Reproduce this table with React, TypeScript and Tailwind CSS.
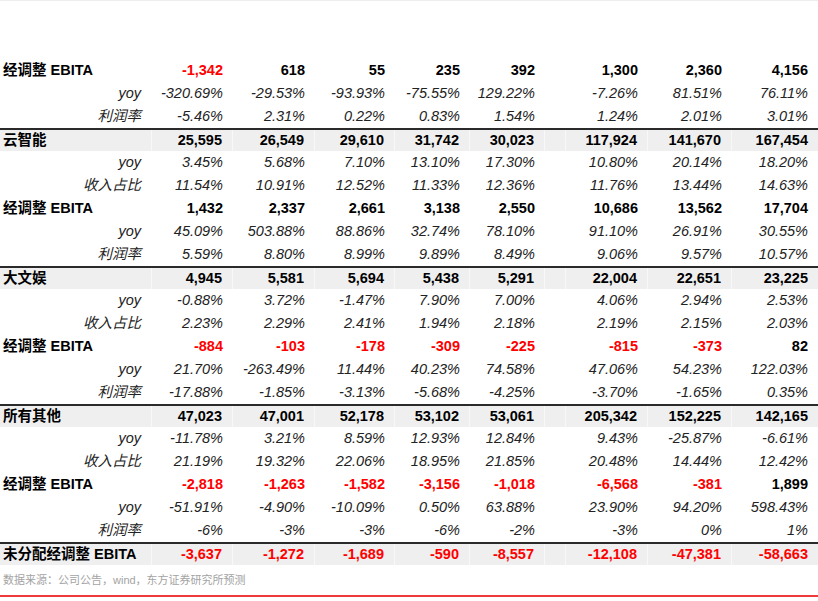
import React from 'react'

type Row = {
  label: string
  kind: 'head' | 'ebita' | 'pct'
  values: string[]
}

const rows: Row[] = [
  { label: '经调整 EBITA', kind: 'ebita', values: ['-1,342', '618', '55', '235', '392', '1,300', '2,360', '4,156'] },
  { label: 'yoy', kind: 'pct', values: ['-320.69%', '-29.53%', '-93.93%', '-75.55%', '129.22%', '-7.26%', '81.51%', '76.11%'] },
  { label: '利润率', kind: 'pct', values: ['-5.46%', '2.31%', '0.22%', '0.83%', '1.54%', '1.24%', '2.01%', '3.01%'] },

  { label: '云智能', kind: 'head', values: ['25,595', '26,549', '29,610', '31,742', '30,023', '117,924', '141,670', '167,454'] },
  { label: 'yoy', kind: 'pct', values: ['3.45%', '5.68%', '7.10%', '13.10%', '17.30%', '10.80%', '20.14%', '18.20%'] },
  { label: '收入占比', kind: 'pct', values: ['11.54%', '10.91%', '12.52%', '11.33%', '12.36%', '11.76%', '13.44%', '14.63%'] },
  { label: '经调整 EBITA', kind: 'ebita', values: ['1,432', '2,337', '2,661', '3,138', '2,550', '10,686', '13,562', '17,704'] },
  { label: 'yoy', kind: 'pct', values: ['45.09%', '503.88%', '88.86%', '32.74%', '78.10%', '91.10%', '26.91%', '30.55%'] },
  { label: '利润率', kind: 'pct', values: ['5.59%', '8.80%', '8.99%', '9.89%', '8.49%', '9.06%', '9.57%', '10.57%'] },

  { label: '大文娱', kind: 'head', values: ['4,945', '5,581', '5,694', '5,438', '5,291', '22,004', '22,651', '23,225'] },
  { label: 'yoy', kind: 'pct', values: ['-0.88%', '3.72%', '-1.47%', '7.90%', '7.00%', '4.06%', '2.94%', '2.53%'] },
  { label: '收入占比', kind: 'pct', values: ['2.23%', '2.29%', '2.41%', '1.94%', '2.18%', '2.19%', '2.15%', '2.03%'] },
  { label: '经调整 EBITA', kind: 'ebita', values: ['-884', '-103', '-178', '-309', '-225', '-815', '-373', '82'] },
  { label: 'yoy', kind: 'pct', values: ['21.70%', '-263.49%', '11.44%', '40.23%', '74.58%', '47.06%', '54.23%', '122.03%'] },
  { label: '利润率', kind: 'pct', values: ['-17.88%', '-1.85%', '-3.13%', '-5.68%', '-4.25%', '-3.70%', '-1.65%', '0.35%'] },

  { label: '所有其他', kind: 'head', values: ['47,023', '47,001', '52,178', '53,102', '53,061', '205,342', '152,225', '142,165'] },
  { label: 'yoy', kind: 'pct', values: ['-11.78%', '3.21%', '8.59%', '12.93%', '12.84%', '9.43%', '-25.87%', '-6.61%'] },
  { label: '收入占比', kind: 'pct', values: ['21.19%', '19.32%', '22.06%', '18.95%', '21.85%', '20.48%', '14.44%', '12.42%'] },
  { label: '经调整 EBITA', kind: 'ebita', values: ['-2,818', '-1,263', '-1,582', '-3,156', '-1,018', '-6,568', '-381', '1,899'] },
  { label: 'yoy', kind: 'pct', values: ['-51.91%', '-4.90%', '-10.09%', '0.50%', '63.88%', '23.90%', '94.20%', '598.43%'] },
  { label: '利润率', kind: 'pct', values: ['-6%', '-3%', '-3%', '-6%', '-2%', '-3%', '0%', '1%'] },

  { label: '未分配经调整 EBITA', kind: 'head', values: ['-3,637', '-1,272', '-1,689', '-590', '-8,557', '-12,108', '-47,381', '-58,663'] },
]

const grid = 'grid grid-cols-[152px_81px_82px_80px_75px_75px_21px_82px_84px_86px]'

function TableRow({ row }: { row: Row }) {
  const head = row.kind === 'head'
  const bold = row.kind !== 'pct'
  const cells = [...row.values.slice(0, 5), null, ...row.values.slice(5)]

  return (
    <div
      className={`${grid} ${head ? 'h-[23px] border-t-2 border-[#2a2a2a] bg-[#efefef]' : 'h-[23px]'}`}
    >
      {bold ? (
        <div className={`flex items-center pl-[3px] font-bold text-black ${head ? 'border-r border-[#f8f8f8]' : ''}`}>
          {row.label}
        </div>
      ) : (
        <div className="flex items-center justify-end pr-[11px] italic text-[#222]">{row.label}</div>
      )}
      {cells.map((v, i) => {
        if (v === null) {
          return <div key={i} className={head ? 'border-r border-[#f8f8f8]' : ''} />
        }
        const red = bold && v.startsWith('-')
        return (
          <div
            key={i}
            className={`flex items-center justify-end pr-[10px] ${head ? 'border-r border-[#f8f8f8] last:border-r-0' : ''} ${
              bold ? 'font-bold' : 'italic'
            } ${red ? 'text-[#ff0000]' : bold ? 'text-black' : 'text-[#222]'}`}
          >
            {v}
          </div>
        )
      })}
    </div>
  )
}

export default function App() {
  return (
    <div
      className="w-[818px] h-[601px] bg-white border-t border-[#eeeeee] text-[14.5px] leading-none"
      style={{ fontFamily: '"Liberation Sans", "Noto Sans CJK SC", sans-serif' }}
    >
      <div className="h-[58px]" />
      {rows.map((row, i) => (
        <TableRow key={i} row={row} />
      ))}
      <div className="h-[30px] flex items-center pl-[3px] text-[11px] text-[#a3a3a3]">
        数据来源：公司公告，wind，东方证券研究所预测
      </div>
      <div className="h-[2px] bg-[#ee3a3a]" />
    </div>
  )
}
